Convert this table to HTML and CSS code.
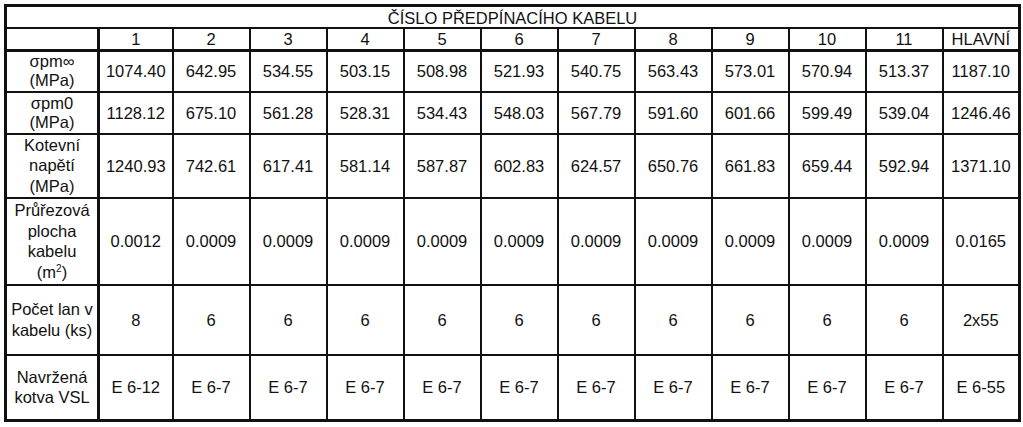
FILE: index.html
```html
<!DOCTYPE html>
<html lang="cs">
<head>
<meta charset="utf-8">
<title>Číslo předpínacího kabelu</title>
<link rel="stylesheet" href="styles.css">
</head>
<body>
<div class="page">
<table class="cables">
  <colgroup>
    <col class="c-label">
    <col class="c-first">
    <col span="10" class="c-data">
    <col class="c-main">
  </colgroup>
  <tr class="r-title">
    <td colspan="13" class="title">ČÍSLO PŘEDPÍNACÍHO KABELU</td>
  </tr>
  <tr class="r-head">
    <td class="label"></td>
    <td>1</td><td>2</td><td>3</td><td>4</td><td>5</td><td>6</td><td>7</td><td>8</td><td>9</td><td>10</td><td>11</td><td>HLAVNÍ</td>
  </tr>
  <tr class="r-1">
    <td class="label">σpm∞<br>(MPa)</td>
    <td>1074.40</td><td>642.95</td><td>534.55</td><td>503.15</td><td>508.98</td><td>521.93</td><td>540.75</td><td>563.43</td><td>573.01</td><td>570.94</td><td>513.37</td><td>1187.10</td>
  </tr>
  <tr class="r-2">
    <td class="label">σpm0<br>(MPa)</td>
    <td>1128.12</td><td>675.10</td><td>561.28</td><td>528.31</td><td>534.43</td><td>548.03</td><td>567.79</td><td>591.60</td><td>601.66</td><td>599.49</td><td>539.04</td><td>1246.46</td>
  </tr>
  <tr class="r-3">
    <td class="label">Kotevní<br>napětí<br>(MPa)</td>
    <td>1240.93</td><td>742.61</td><td>617.41</td><td>581.14</td><td>587.87</td><td>602.83</td><td>624.57</td><td>650.76</td><td>661.83</td><td>659.44</td><td>592.94</td><td>1371.10</td>
  </tr>
  <tr class="r-4">
    <td class="label">Průřezová<br>plocha<br>kabelu<br>(m<sup>2</sup>)</td>
    <td>0.0012</td><td>0.0009</td><td>0.0009</td><td>0.0009</td><td>0.0009</td><td>0.0009</td><td>0.0009</td><td>0.0009</td><td>0.0009</td><td>0.0009</td><td>0.0009</td><td>0.0165</td>
  </tr>
  <tr class="r-5">
    <td class="label">Počet lan v<br>kabelu (ks)</td>
    <td>8</td><td>6</td><td>6</td><td>6</td><td>6</td><td>6</td><td>6</td><td>6</td><td>6</td><td>6</td><td>6</td><td>2x55</td>
  </tr>
  <tr class="r-6">
    <td class="label">Navržená<br>kotva VSL</td>
    <td>E 6-12</td><td>E 6-7</td><td>E 6-7</td><td>E 6-7</td><td>E 6-7</td><td>E 6-7</td><td>E 6-7</td><td>E 6-7</td><td>E 6-7</td><td>E 6-7</td><td>E 6-7</td><td>E 6-55</td>
  </tr>
</table>
</div>
</body>
</html>
```

FILE: styles.css
```css
html, body {
  margin: 0;
  padding: 0;
  background: #ffffff;
}

.page {
  padding: 4px 0 0 4px;
}

.cables {
  border-collapse: collapse;
  table-layout: fixed;
  width: 1016px;
  border: 3px solid #111;
  font-family: "Liberation Sans", Arial, sans-serif;
  font-size: 16.5px;
  color: #111;
}

.c-label { width: 93px; }
.c-first { width: 74px; }
.c-data { width: 77px; }
.c-main { width: 77px; }

.cables td {
  border: 2px solid #111;
  padding: 0 1px;
  text-align: center;
  vertical-align: middle;
  line-height: 20px;
  white-space: nowrap;
}

.cables td.label {
  border-right: 3px solid #111;
  line-height: 20.5px;
}

.cables td.title {
  line-height: 16px;
  padding-top: 2px;
  border-bottom-width: 2px;
}

.r-head td {
  border-bottom: 3px solid #111;
  line-height: 18px;
}

.r-1 td.label,
.r-2 td.label {
  line-height: 19px;
}

.r-title { height: 22px; }
.r-head { height: 23px; }
.r-1 { height: 41px; }
.r-2 { height: 42px; }
.r-3 { height: 64px; }
.r-4 { height: 87px; }
.r-5 { height: 70px; }
.r-6 { height: 66px; }

.cables sup {
  font-size: 10px;
  line-height: 0;
  vertical-align: 6px;
}
```
